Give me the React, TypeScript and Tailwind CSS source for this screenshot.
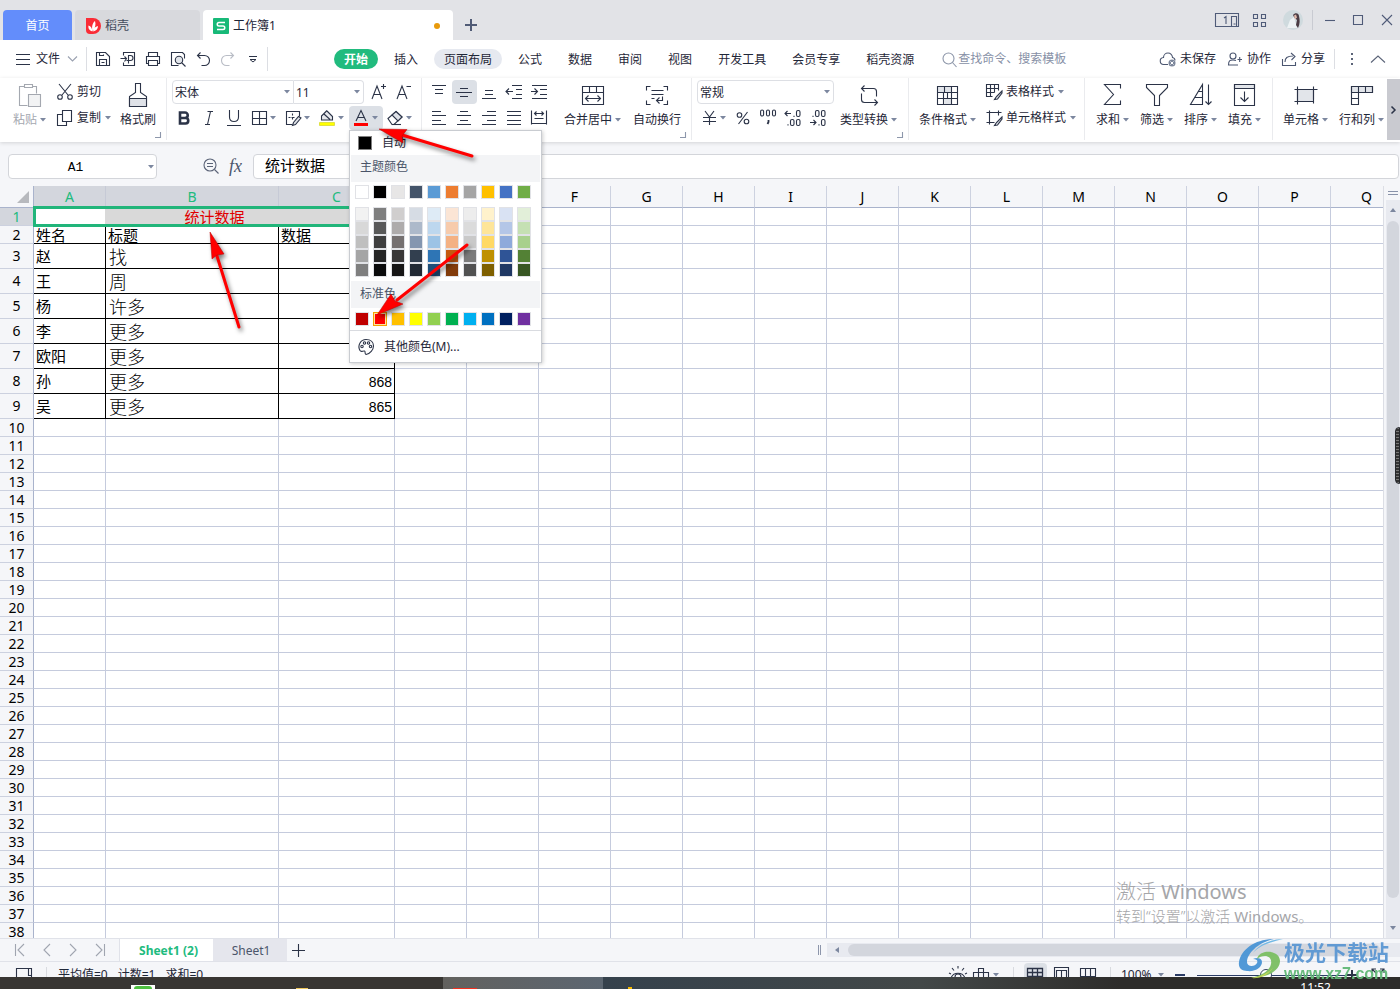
import { ReactNode } from 'react';
import { clsx } from 'clsx';

const INK = '#2b3347';

type IconProps = { w?: number; h?: number; color?: string; snap?: boolean; children: ReactNode };

// snap moves whole-number coordinates onto pixel centres so 1px strokes stay sharp
function Icon({ w = 16, h = w, color = INK, snap = false, children }: IconProps) {
  return (
    <svg width={w} height={h} viewBox={snap ? `-0.5 -0.5 ${w} ${h}` : `0 0 ${w} ${h}`} fill="none" stroke={color} strokeWidth="1.1" className="shrink-0 overflow-visible" aria-hidden="true">
      {children}
    </svg>
  );
}

function Caret() {
  return (
    <svg width="6" height="4" viewBox="0 0 6 4" className="shrink-0" aria-hidden="true">
      <path d="M0 0h6L3 3.5z" fill="#7c879f" />
    </svg>
  );
}

function BigButton({ icon, label, caret = false, className = '' }: { icon: ReactNode; label: string; caret?: boolean; className?: string }) {
  return (
    <button type="button" className={clsx('flex shrink-0 flex-col items-center gap-[5px] whitespace-nowrap pt-[5px]', className)}>
      <span className="flex h-6 items-center">{icon}</span>
      <span className="flex h-4 items-center gap-[3px] leading-4">
        {label}
        {caret && <Caret />}
      </span>
    </button>
  );
}

function RowButton({ icon, label, caret = false, title }: { icon: ReactNode; label?: string; caret?: boolean; title?: string }) {
  return (
    <button type="button" aria-label={title} className="flex h-6 items-center gap-1 whitespace-nowrap leading-[18px]">
      {icon}
      {label}
      {caret && <Caret />}
    </button>
  );
}

function Tool({ title, active = false, children }: { title: string; active?: boolean; children: ReactNode }) {
  return (
    <button type="button" aria-label={title} className={clsx('flex h-6 w-[25px] items-center justify-center rounded-sm pr-px', active && 'bg-[#dce0e6]')}>
      {children}
    </button>
  );
}

function SplitTool({ title, active = false, children }: { title: string; active?: boolean; children: ReactNode }) {
  return (
    <button type="button" aria-label={title} className={clsx('flex h-6 w-[34px] items-center gap-[3px] rounded-sm pl-1', active && 'bg-[#dce0e6]')}>
      {children}
      <Caret />
    </button>
  );
}

function Select({ label, value, className }: { label: string; value: string; className: string }) {
  return (
    <div className={clsx('relative h-6 border border-[#dddfe4] bg-white', className)}>
      <select aria-label={label} className="h-full w-full appearance-none bg-transparent pl-0.5 pt-0.5 text-xs leading-4 outline-none">
        <option>{value}</option>
      </select>
      <span className="pointer-events-none absolute right-[3px] top-1/2 -translate-y-1/2">
        <Caret />
      </span>
    </div>
  );
}

function Corner() {
  return (
    <span className="absolute bottom-0.5 right-[5px]">
      <Icon w={6} color="#8d97ab">
        <path d="M5.5 0v5.5H0" />
      </Icon>
    </span>
  );
}

function Group({ className, children, corner = false }: { className?: string; children: ReactNode; corner?: boolean }) {
  return (
    <div className={clsx('relative flex shrink-0 items-start border-r border-[#eaebee]', className)}>
      {children}
      {corner && <Corner />}
    </div>
  );
}

/* ---------- title bar ---------- */

function TitleBar() {
  return (
    <header className="flex h-10 shrink-0 items-end bg-[#e2e3e7] pl-[3px]">
      <button type="button" className="h-[30px] w-[69px] rounded-t-sm bg-[#638dfb] pt-0.5 text-white">首页</button>
      <button type="button" className="ml-[3px] flex h-[30px] w-[125px] items-center gap-1 rounded-t-sm bg-[#d8d9dd] pl-[11px] pt-0.5 text-[#444c5c]">
        <svg width="15" height="16" viewBox="0 0 15 16" aria-hidden="true">
          <path d="M0 0h7a8 8 0 0 1 0 16H4a4 4 0 0 1-4-4z" fill="#fa2c37" />
          <path d="M6.500 13.500C3 12.500 2 10 2.500 7.500c2.500.5 3.500 2.500 4 6zM6.500 13C5.500 9 6.500 5 9 3c1 3 .5 7-2.500 10zM7 13.500c.5-3 2-5 5-5.500 0 3-2 5-5 5.500z" fill="#fff" />
        </svg>
        稻壳
      </button>
      <button type="button" className="ml-[3px] flex h-[30px] w-[250px] items-center gap-1 rounded-t-sm bg-white pl-[10px] pt-0.5 text-[#1c2436]">
        <svg width="16" height="16" viewBox="0 0 16 16" aria-hidden="true">
          <rect width="16" height="16" rx="1" fill="#17b978" />
          <path d="M12 4.500H6a1.700 1.700 0 0 0 0 3.500h4a1.700 1.700 0 0 1 0 3.500H4" fill="none" stroke="#fff" strokeWidth="1.500" />
        </svg>
        工作簿1
        <span className="ml-auto mr-[13px] size-1.5 rounded-full bg-[#e89a0c]" />
      </button>
      <button type="button" aria-label="新建" className="ml-3 flex h-[30px] items-center">
        <Icon w={12} color="#505b76"><path d="M6 0v12M0 6h12" strokeWidth="2" /></Icon>
      </button>
      <div className="ml-auto flex h-10 items-center text-[#4f5b78]">
        <button type="button" aria-label="窗口" className="mr-3">
          <Icon w={25} h={14} color="#4f5b78">
            <path d="M.5.5h23v13H.500zM16.500 13.500V3.500h5v10M9 5l2-1.500V11M18.500 11h2" />
          </Icon>
        </button>
        <button type="button" aria-label="应用" className="mr-4">
          <Icon w={15} color="#4f5b78" snap><path d="M1 1h4v4H1zM9 1h4v4H9zM1 9h4v4H1zM9 9h4v4H9z" /></Icon>
        </button>
        <button type="button" aria-label="用户">
          <svg width="20" height="20" viewBox="0 0 20 20" aria-hidden="true">
            <circle cx="10" cy="10" r="10" fill="#cfdade" />
            <path d="M4 18l3-8 4-3 3 11z" fill="#edf2f4" />
            <path d="M10 5c2-3 6-2 6 1 1 4 1 8-1 12l-2-3 1-5-3-3z" fill="#4a3c44" />
            <path d="M11 5.500l2-1 1 3-2 2z" fill="#dfb9ab" />
          </svg>
        </button>
        <span className="ml-[9px] h-5 w-px bg-[#c9cbd2]" />
        <button type="button" aria-label="最小化" className="ml-3"><Icon w={10} color="#4f5b78"><path d="M0 5.500h10" /></Icon></button>
        <button type="button" aria-label="最大化" className="ml-[18px]"><Icon w={10} color="#4f5b78"><path d="M.5.5h9v9h-9z" /></Icon></button>
        <button type="button" aria-label="关闭" className="ml-[19px] mr-2"><Icon w={10} color="#4f5b78"><path d="M0 0l10 10M10 0L0 10" /></Icon></button>
      </div>
    </header>
  );
}

/* ---------- menu row ---------- */

const TABS = ['开始', '插入', '页面布局', '公式', '数据', '审阅', '视图', '开发工具', '会员专享', '稻壳资源'];

function MenuBar() {
  return (
    <nav className="flex h-[38px] shrink-0 items-center whitespace-nowrap bg-white pl-4">
      <button type="button" className="flex items-center gap-[6px]">
        <Icon w={14} h={12}><path d="M0 1.500h14M0 6.500h14M0 11.500h14" strokeWidth="1" /></Icon>
        文件
        <span className="ml-0.5"><Icon w={9} h={6} color="#9aa1b0"><path d="M0 .5l4.500 4.500L9 .5" /></Icon></span>
      </button>
      <span className="ml-[9px] mr-1 h-6 w-px bg-[#dcdee3]" />
      <Tool title="保存"><Icon snap><path d="M1 1h9l4 4v9H1zM4 14V8h7v6M4 1v3h4V3M6 11h3" /></Icon></Tool>
      <Tool title="输出为PDF"><Icon snap><path d="M3 4V1h11v13H3v-3M0 7h6M4 5l2 2-2 3M8 12V4h2a2 2 0 0 1 0 5H6" /></Icon></Tool>
      <Tool title="打印"><Icon snap><path d="M3 5V1h9v4M3 12H1V5h13v7h-2M3 9h9v5H3z" /></Icon></Tool>
      <Tool title="打印预览"><Icon snap><path d="M8 14H1V1h11l2 2v4M11 11l4 4" /><circle cx="8.500" cy="8.500" r="3.700" fill="#e2e5ea" /></Icon></Tool>
      <Tool title="撤销"><Icon snap><path d="M5 1L2 4l3 3M2 4h7a5 5 0 0 1 0 10H6" /></Icon></Tool>
      <Tool title="恢复"><Icon snap color="#b9bdc6"><path d="M10 1l3 3-3 3M13 4H6a5 5 0 0 0 0 10h3" /></Icon></Tool>
      <Tool title="更多"><Icon w={8} h={8}><path d="M0 1.500h8M1 4.500l3 2.500 3-2.500z" strokeWidth="1" /></Icon></Tool>
      <span className="ml-px h-6 w-px bg-[#dcdee3]" />

      <div className="ml-[66px] flex gap-[6px]">
        {TABS.map((tab) => (
          <button
            key={tab}
            type="button"
            className={clsx('h-5 rounded-full px-[10px] leading-[22px]', tab === '开始' && 'bg-[#21bb7e] font-bold text-white', tab === '页面布局' && 'bg-[#e6e9f0]')}
          >
            {tab}
          </button>
        ))}
      </div>

      <label className="ml-[18px] flex min-w-0 flex-1 items-center gap-px">
        <Icon w={15} color="#8e97aa"><circle cx="6.500" cy="6.500" r="5.500" /><path d="M10.500 10.500L14.500 15" /></Icon>
        <input aria-label="查找" placeholder="查找命令、搜索模板" className="w-[130px] bg-transparent outline-none placeholder:text-[#8790a6]" />
      </label>

      <button type="button" className="flex items-center gap-1">
        <Icon color="#4b5670"><path d="M8 13.500H4a3.500 3.500 0 0 1-.5-7 4.500 4.500 0 0 1 9 0 3 3 0 0 1 2.500 3" /><circle cx="12" cy="12" r="3.500" fill="#7d879c" stroke="none" /><path d="M10.500 10.500l3 3M13.500 10.500l-3 3" stroke="#fff" strokeWidth="1" /></Icon>
        未保存
      </button>
      <button type="button" className="ml-3 flex items-center gap-[5px]">
        <Icon w={14} h={14} color="#4b5670"><circle cx="5" cy="4" r="3" /><path d="M10 13H.500c0-5 2-5 4.500-5 1.500 0 2 0 3 .5M9.500 7.500H14M11.700 5v5" /></Icon>
        协作
      </button>
      <button type="button" className="ml-[11px] flex items-center gap-[5px]">
        <Icon w={14} h={14} color="#4b5670"><path d="M.5 7v6.500h13V10M3 10c0-4 2-6 8-6M9 1l4 3.500L9.500 8" /></Icon>
        分享
      </button>
      <span className="ml-[9px] h-5 w-px bg-[#dcdee3]" />
      <button type="button" aria-label="更多选项" className="ml-4">
        <svg width="3" height="12" viewBox="0 0 3 12" fill="#5b6478"><path d="M0 0h2v2H0zM0 5h2v2H0zM0 10h2v2H0z" /></svg>
      </button>
      <button type="button" aria-label="折叠功能区" className="ml-[17px] mr-[15px]">
        <Icon w={14} h={8} color="#5b6478"><path d="M0 7.500l7-6.500 7 6.500" /></Icon>
      </button>
    </nav>
  );
}

/* ---------- font colour menu ---------- */

const THEME_ROWS = [
  ['#f2f2f2', '#7f7f7f', '#d0cece', '#d6dce4', '#deebf6', '#fbe5d5', '#ededed', '#fff2cc', '#d9e2f3', '#e2efd9'],
  ['#d8d8d8', '#595959', '#aeabab', '#adb9ca', '#bdd7ee', '#f7cbac', '#dbdbdb', '#fee599', '#b4c6e7', '#c5e0b3'],
  ['#bfbfbf', '#3f3f3f', '#757070', '#8496b0', '#9cc3e5', '#f4b183', '#c9c9c9', '#ffd965', '#8eaadb', '#a8d08d'],
  ['#a5a5a5', '#262626', '#3a3838', '#323f4f', '#2e75b5', '#c55a11', '#7b7b7b', '#bf9000', '#2f5496', '#538135'],
  ['#7f7f7f', '#0c0c0c', '#171616', '#222a35', '#1e4e79', '#833c0b', '#525252', '#7f6000', '#1f3864', '#375623'],
];
const THEME = ['#ffffff', '#000000', '#e7e6e6', '#44546a', '#5b9bd5', '#ed7d31', '#a5a5a5', '#ffc000', '#4472c4', '#70ad47'];
const STANDARD = ['#c00000', '#ff0000', '#ffc000', '#ffff00', '#92d050', '#00b050', '#00b0f0', '#0070c0', '#002060', '#7030a0'];

function Swatches({ colors, selected }: { colors: string[]; selected?: string }) {
  return (
    <div className="flex gap-1 pl-1">
      {colors.map((c, i) => (
        <button
          key={i}
          type="button"
          aria-label={c}
          className={clsx('size-[14px] border', c === selected ? 'border-[#f5a100] ring-1 ring-inset ring-[#ffe2a0]' : 'border-[#e1e2e6]')}
          style={{ backgroundColor: c }}
        />
      ))}
    </div>
  );
}

function ColorMenu() {
  return (
    <div className="absolute left-0 top-full z-20 w-[193px] border border-[#c9ccd1] bg-white text-left shadow-[1px_1px_4px_rgba(0,0,0,0.2)]">
      <button type="button" className="flex h-6 w-full items-center gap-[10px] pl-2 leading-[18px]">
        <span className="size-[14px] border border-[#7f7f7f] bg-black" />
        自动
      </button>
      <p className="mx-px h-[27px] bg-[#f3f4f6] pl-[9px] leading-6 text-[#4a5468]">主题颜色</p>
      <div className="pb-2 pl-px pt-[3px]"><Swatches colors={THEME} /></div>
      <div className="pb-1 pl-px">
        {THEME_ROWS.map((row, i) => <Swatches key={i} colors={row} />)}
      </div>
      <p className="mx-px h-[27px] bg-[#f3f4f6] pl-[9px] leading-[26px] text-[#4a5468]">标准色</p>
      <div className="py-1 pl-px"><Swatches colors={STANDARD} selected="#ff0000" /></div>
      <button type="button" className="flex h-8 w-full items-center gap-[10px] border-t border-[#d9dbe0] pl-2 leading-[18px]">
        <Icon w={16}>
          <path d="M8 15.500c-2-1 0-3-1.500-3.500C5 11.500 3 13.500 2 11.500-1 6 3 .5 8 .5c5 0 7.500 3 7.500 6.500S12 15 8 15.500z" />
          <circle cx="4" cy="7.500" r="1.200" /><circle cx="6.500" cy="4" r="1.200" /><circle cx="10.500" cy="4" r="1.200" /><circle cx="12.500" cy="7.500" r="1.200" />
        </Icon>
        其他颜色(M)...
      </button>
    </div>
  );
}

/* ---------- ribbon ---------- */

function Ribbon() {
  return (
    <section className="relative z-10 flex h-16 shrink-0 bg-white pb-0.5 shadow-[0_1px_4px_rgba(0,0,0,0.14)]">
      <Group corner className="w-[167px]">
        <BigButton className="ml-[13px] text-[#a4a8b0]" caret label="粘贴" icon={
          <Icon snap w={22} h={24} color="#a4a8b0"><path d="M8 22H0V3h5M13 3h4v7M5 1h8v3H5z" /><path d="M9 11h12v12H9z" fill="#f2f3f4" /></Icon>
        } />
        <div className="ml-[11px] flex flex-col gap-0.5 pt-0.5">
          <RowButton label="剪切" icon={<Icon><path d="M2 0l9 11M14 0L5 11" /><circle cx="3" cy="13" r="2.300" /><circle cx="13" cy="13" r="2.300" /></Icon>} />
          <RowButton caret label="复制" icon={<Icon snap><path d="M5 0h9v11H5zM5 4H0v11h9v-4" /></Icon>} />
        </div>
        <BigButton className="ml-[9px]" label="格式刷" icon={
          <Icon snap w={20} h={24}><path d="M7 0h5v9l6 4v10H1V13l6-4z" /><path d="M1 15h17v8H1z" fill="#dfe2e8" /></Icon>
        } />
      </Group>

      <Group className="w-[255px] pl-[5px] pt-0.5">
        <div className="flex flex-col gap-0.5">
          <div className="flex">
            <Select label="字体" value="宋体" className="w-[122px] rounded-l-sm" />
            <Select label="字号" value="11" className="w-[70px] rounded-r-sm border-l-0" />
            <span className="w-[3px]" />
            <Tool title="增大字号"><Icon><path d="M1 15L6 2l5 13M2.500 10.500h7M12.500 0v5M10 2.500h5" /></Icon></Tool>
            <Tool title="减小字号"><Icon><path d="M1 15L6 2l5 13M2.500 10.500h7M10.500 2.500H15" /></Icon></Tool>
          </div>
          <div className="flex">
            <Tool title="加粗"><Icon w={12} h={14}><path d="M2 1.500h5a2.500 2.500 0 0 1 0 5.500H2zM2 7h5.500a2.700 2.700 0 0 1 0 5.500H2z" strokeWidth="2.600" /></Icon></Tool>
            <Tool title="倾斜"><Icon w={10} h={14}><path d="M3.500.5H9M1 13.500h5M6.500.5L3.500 13.500" /></Icon></Tool>
            <Tool title="下划线"><Icon w={16} h={16}><path d="M3.500 0v7c0 6 9 6 9 0V0M1 15.500h14" /></Icon></Tool>
            <SplitTool title="边框"><Icon snap><path d="M1 1h14v13H1zM8 1v13M1 8h14" /></Icon></SplitTool>
            <SplitTool title="绘制边框"><Icon snap><path d="M7 14H1V1h13v5M7 3v2M7 7v2M3 7h2M6 7h3" /><path d="M15.500 7.500L13 6l-5 6-1 3 3-1z" fill="#dfe2e8" /></Icon></SplitTool>
            <SplitTool title="填充颜色"><Icon><path d="M8 .5L2.500 6v4h11V6.500L8 1M5 4L11 9.500" fill="#e6e8ec" /><path d="M.5 12.500h15v3H.500z" fill="#ff0" stroke="#c4c400" strokeWidth=".5" /></Icon></SplitTool>
            <div className="relative">
              <SplitTool title="字体颜色" active><Icon><path d="M3 11L8 .5 13 11M5 7.500h6" /><path d="M1 14.500h14" stroke="#f00" strokeWidth="3" /></Icon></SplitTool>
              <ColorMenu />
            </div>
            <SplitTool title="清除"><Icon><path d="M1 8.500L9 1.500l6 5.500-8 7.500H5z" /><path d="M9 1.500l6 5.500-4 4L5 5z" fill="#dfe2e8" /><path d="M5 14.500h9" /></Icon></SplitTool>
          </div>
        </div>
      </Group>

      <Group corner className="w-[270px] pl-[5px] pt-0.5">
        <div className="flex flex-col gap-0.5">
          <div className="flex">
            <Tool title="顶端对齐"><Icon><path d="M1 1.500h14M4 5.500h8M4 9.500h8" /></Icon></Tool>
            <Tool title="垂直居中" active><Icon><path d="M4 4.500h8M0 8.500h16M4 12.500h8" /></Icon></Tool>
            <Tool title="底端对齐"><Icon><path d="M4 6.500h8M4 10.500h8M1 14.500h14" /></Icon></Tool>
            <Tool title="减少缩进"><Icon><path d="M6 1.500h10M10 5.500h6M10 10.500h6M6 14.500h10M0 7.500h7M3 4.500l-3 3 3 3" /></Icon></Tool>
            <Tool title="增加缩进"><Icon><path d="M1 1.500h15M9 5.500h7M9 10.500h7M1 14.500h15M0 7.500h6M3.500 4.500l3 3-3 3" /></Icon></Tool>
          </div>
          <div className="flex">
            <Tool title="左对齐"><Icon><path d="M1 1.500h9M1 5.500h14M1 10.500h9M1 14.500h14" /></Icon></Tool>
            <Tool title="居中"><Icon><path d="M4 1.500h8M1 5.500h14M4 10.500h8M1 14.500h14" /></Icon></Tool>
            <Tool title="右对齐"><Icon><path d="M6 1.500h9M1 5.500h14M6 10.500h9M1 14.500h14" /></Icon></Tool>
            <Tool title="两端对齐"><Icon><path d="M1 1.500h14M1 5.500h14M1 10.500h14M1 14.500h14" /></Icon></Tool>
            <Tool title="分散对齐"><Icon snap><path d="M0 0v14M15 0v14M3 3h9M5 1L3 3l2 2M10 1l2 2-2 2M3 8h9M0 13h15" /></Icon></Tool>
          </div>
        </div>
        <BigButton className="-mt-0.5 ml-3" caret label="合并居中" icon={
          <Icon snap w={22} h={20}><path d="M0 1h21v18H0zM0 7h21M7 1v6M14 1v6M3 13h15M6 10l-3 3 3 3M15 10l3 3-3 3" /></Icon>
        } />
        <BigButton className="-mt-0.5 ml-3" label="自动换行" icon={
          <Icon snap w={22} h={20}><path d="M4 1H0v4M17 1h4v4M4 19H0v-4M17 19h4v-4M5 5h12M5 9h12M5 13h3M16 11v4h-6M13 12l-3 3 3 3" /></Icon>
        } />
      </Group>

      <Group corner className="w-[217px] pl-[5px] pt-0.5">
        <div className="flex flex-col gap-0.5">
          <Select label="数字格式" value="常规" className="w-[137px] rounded-sm" />
          <div className="flex">
            <SplitTool title="货币"><Icon><path d="M4 1l4.500 6L13 1M8.500 7v8M2 7.500h13M2 11.500h13" /></Icon></SplitTool>
            <Tool title="百分比"><Icon w={14} h={14}><circle cx="3.500" cy="4" r="2.300" /><circle cx="10.500" cy="10.500" r="2.300" /><path d="M11.500 1L2.500 13" /></Icon></Tool>
            <Tool title="千位分隔"><Icon><rect x=".6" y="0" width="3" height="6" rx="1.500" /><rect x="6.500" y="0" width="3" height="6" rx="1.500" /><rect x="12.500" y="0" width="3" height="6" rx="1.500" /><path d="M8.500 10v2l-1 2" strokeWidth="1.800" /></Icon></Tool>
            <Tool title="增加小数位"><Icon><path d="M0 3.500h6M2.500 1L0 3.500 2.500 6M9 7V5.800M3 15.500v-1.200" /><rect x="11.500" y="0.500" width="3.500" height="6" rx="1.500" /><rect x="5.500" y="9.500" width="3.500" height="6" rx="1.500" /><rect x="11.500" y="9.500" width="3.500" height="6" rx="1.500" /></Icon></Tool>
            <Tool title="减少小数位"><Icon><path d="M0 12.500h6M3.500 10L6 12.500 3.500 15M3 7V5.800M9 15.500v-1.200" /><rect x="5.500" y="0.500" width="3.500" height="6" rx="1.500" /><rect x="11.500" y="0.500" width="3.500" height="6" rx="1.500" /><rect x="11.500" y="9.500" width="3.500" height="6" rx="1.500" /></Icon></Tool>
          </div>
        </div>
        <BigButton className="-mt-0.5 ml-[6px]" caret label="类型转换" icon={
          <Icon snap w={20} h={22}><path d="M5 1L2 4l3 3M2 4h12a3 3 0 0 1 3 3v5M2 9v6a3 3 0 0 0 3 3h13M15 15l3 3-3 3" /></Icon>
        } />
      </Group>

      <Group className="w-[176px]">
        <BigButton className="ml-[10px]" caret label="条件格式" icon={
          <Icon snap w={22} h={20}><path d="M0 1h14v6H0zM7 13h7v6H7z" fill="#e2e5ea" stroke="none" /><path d="M0 1h20v18H0zM0 7h20M0 13h20M7 1v6M14 1v18M10 7v6M6 7v12" /></Icon>
        } />
        <div className="ml-[10px] flex flex-col gap-0.5 pt-0.5">
          <RowButton caret label="表格样式" icon={<Icon snap><path d="M6 12H0V0h12v6M0 4h12M0 8h8M4 0v12M8 0v8" /><path d="M15.500 6.500L10 12l-2 3 3-.5 4.500-6z" fill="#dfe2e8" /></Icon>} />
          <RowButton caret label="单元格样式" icon={<Icon snap><path d="M3 0v14M0 2h15M12 0v5M0 12h8" /><path d="M15.500 6.500L10 12l-2 3 3-.5 4.500-6z" fill="#dfe2e8" /></Icon>} />
        </div>
      </Group>

      <Group className="w-[188px] gap-[11px] pl-[11px]">
        <BigButton caret label="求和" icon={<Icon snap w={20} h={22}><path d="M17 4V0H1l9 10L1 20h16v-4" /></Icon>} />
        <BigButton caret label="筛选" icon={<Icon snap w={22} h={22}><path d="M0 0h21v3l-8 8v10H8V11L0 3z" /></Icon>} />
        <BigButton caret label="排序" icon={<Icon snap w={24} h={22}><path d="M13 20V0L1 20zM9 7h4M5 13h8M19 0v20M16 17l3 3 3-3" /></Icon>} />
        <BigButton caret label="填充" icon={<Icon snap w={22} h={22}><path d="M0 0h20v4H0z" fill="#e2e5ea" /><path d="M0 0h20v21H0zM10 7v10M6 13l4 4 4-4" /></Icon>} />
      </Group>

      <div className="flex min-w-0 flex-1 pl-[10px]">
        <div className="flex gap-[11px]">
          <BigButton caret label="单元格" icon={<Icon snap w={24} h={20}><path d="M3 4h16v12H3z" fill="#e2e5ea" /><path d="M3 1v18M19 1v13M0 4h23M0 16h17M19 16v2" /></Icon>} />
          <BigButton caret label="行和列" icon={<Icon snap w={22} h={20}><path d="M0 1h21v6H0z" fill="#e2e5ea" /><path d="M0 1h21v6H7v12H0zM0 7h7M7 1v6M14 1v6M0 13h7" /></Icon>} />
        </div>
        <button type="button" aria-label="向右滚动" className="ml-auto mt-px flex w-[13px] shrink-0 items-center justify-center bg-[#c9cad0]">
          <Icon w={5} h={8}><path d="M.5 0.500L4 4 .5 7.500" strokeWidth="1.500" /></Icon>
        </button>
      </div>
    </section>
  );
}

function FormulaBar() {
  return (
    <div className="flex h-11 shrink-0 items-start bg-[#f5f6f9] pl-2 pr-px pt-3 text-black">
      <div className="relative h-[25px] w-[149px] rounded-sm border border-[#d3d5da] bg-white">
        <input aria-label="名称框" defaultValue="A1" className="h-full w-full bg-transparent pr-[14px] pt-0.5 text-center font-['Liberation_Mono',monospace] text-[13px] outline-none" />
        <span className="pointer-events-none absolute right-0.5 top-1/2 -translate-y-1/2"><Caret /></span>
      </div>
      <button type="button" aria-label="缩小" className="ml-[46px] mt-1">
        <Icon w={16} color="#5b6478"><circle cx="7" cy="7" r="6" /><path d="M11.500 11.500l4 4M4 5.500h6M4 8.500h6" /></Icon>
      </button>
      <button type="button" className="ml-[10px] w-6 text-left font-['Liberation_Serif',serif] text-lg italic leading-6 text-[#4b556b]">fx</button>
      <input aria-label="编辑栏" defaultValue="统计数据" className="h-[25px] min-w-0 flex-1 rounded-sm border border-[#d3d5da] bg-white pb-[5px] pl-[11px] text-[15px] leading-4 outline-none" />
    </div>
  );
}

/* ---------- sheet ---------- */

const COLS = 'ABCDEFGHIJKLMNOPQ'.split('');
const ROWS = Array.from({ length: 38 }, (_, i) => i + 1);
const DATA: Record<number, [string, string, string]> = {
  2: ['姓名', '标题', '数据'],
  3: ['赵', '找', ''],
  4: ['王', '周', ''],
  5: ['杨', '许多', ''],
  6: ['李', '更多', ''],
  7: ['欧阳', '更多', ''],
  8: ['孙', '更多', '868'],
  9: ['吴', '更多', '865'],
};

function Sheet() {
  return (
    <div className="min-w-0 flex-1 overflow-hidden border-r border-[#dcdee5] bg-white">
      <table className="w-[1403px] table-fixed border-separate border-spacing-0 text-black">
        <colgroup>
          <col className="w-[34px]" />
          <col className="w-[72px]" />
          <col className="w-[173px]" />
          <col className="w-[116px]" />
          {COLS.slice(3).map((c) => <col key={c} className="w-[72px]" />)}
        </colgroup>
        <thead>
          <tr className="h-[22px] text-sm leading-4">
            <th className="border-b border-r border-[#a9b3cc] bg-[#f5f6f9] p-0">
              <svg width="12" height="12" viewBox="0 0 12 12" className="ml-auto mr-1" aria-hidden="true"><path d="M12 0v12H0z" fill="#b7b9be" /></svg>
            </th>
            {COLS.map((c, i) => (
              <th
                key={c}
                scope="col"
                className={clsx('border-b border-r border-b-[#a9b3cc] p-0 font-normal', i < 3 ? 'border-r-[#c6cad6] bg-[#d3d6dd] text-[#21bb7e]' : 'border-r-[#cdd2e0] bg-[#f5f6f9]')}
              >
                {c}
              </th>
            ))}
          </tr>
        </thead>
        <tbody>
          {ROWS.map((r) => {
            const tall = r > 2 && r < 10;
            const row = DATA[r];
            return (
              <tr key={r} className={tall ? 'h-[25px]' : 'h-[18px]'}>
                <th scope="row" className={clsx('border-b border-r border-b-[#ccd1df] border-r-[#a9b3cc] p-0 text-sm font-normal leading-4', r === 1 ? 'bg-[#d3d6dd] text-[#21bb7e]' : 'bg-[#f5f6f9]')}>
                  {r}
                </th>
                {r === 1 && (
                  <td colSpan={3} className="relative p-0">
                    <div className="flex h-[17px]">
                      <span className="w-[71px]" />
                      <span className="flex-1 bg-[#d9d9d9]" />
                    </div>
                    <span className="absolute inset-0 text-center text-[15px] leading-[18px] text-[#e00000]">统计数据</span>
                    <span className="absolute -bottom-px -left-px -right-px -top-0.5 border-[3px] border-[#21b57a]" />
                  </td>
                )}
                {COLS.slice(r === 1 ? 3 : 0).map((c, i) => {
                  const filled = row && i < 3;
                  return (
                    <td
                      key={c}
                      className={clsx(
                        'overflow-hidden whitespace-nowrap border-b border-r py-0',
                        filled ? 'border-black' : 'border-[#c5cbdd]',
                        filled && i === 2 && r > 2 ? "pr-0.5 pt-0.5 text-right font-['Liberation_Sans',sans-serif]" : 'pl-0.5',
                        filled && i === 1 && tall && 'pl-[3px] pt-0.5 text-lg font-light leading-5',
                        filled && i === 2 && tall ? 'text-sm leading-4' : !(i === 1 && tall) && 'text-[15px] leading-4',
                      )}
                    >
                      {filled ? row[i] : null}
                    </td>
                  );
                })}
              </tr>
            );
          })}
        </tbody>
      </table>
    </div>
  );
}

function VerticalScroll() {
  return (
    <div className="relative flex w-4 shrink-0 flex-col items-center bg-[#f5f6f9] pl-[2px] pt-[5px]">
      <Icon w={10} h={4} color="#8993aa"><path d="M0 .5h10M0 3.500h10" strokeWidth="1" /></Icon>
      <div className="mt-[5px] flex w-[14px] flex-1 flex-col items-center bg-[#e8eaf0]">
        <svg width="6" height="4" viewBox="0 0 6 4" className="mt-2" aria-hidden="true"><path d="M0 4h6L3 0z" fill="#7c879f" /></svg>
        <span className="mb-7 mt-[9px] w-3 flex-1 rounded-full bg-[#d3d6dd]" />
        <svg width="6" height="4" viewBox="0 0 6 4" className="mb-2" aria-hidden="true"><path d="M0 0h6L3 4z" fill="#7c879f" /></svg>
      </div>
      <span className="absolute right-0 top-[241px] h-[57px] w-[5px] rounded-l-sm border border-[#26282c] bg-[repeating-linear-gradient(#777_0_1px,#333_1px_3px)]" />
    </div>
  );
}

function SheetTabs() {
  return (
    <div className="flex h-6 shrink-0 items-stretch border-y border-[#e0e2e9] bg-[#f5f6f9]">
      <div className="flex w-[120px] items-center gap-[18px] border-r border-[#e0e2e9] pl-[15px]">
        <button type="button" aria-label="第一个"><Icon w={10} h={12} color="#a0a5b0"><path d="M.500 0v12M9 0L3 6l6 6" /></Icon></button>
        <button type="button" aria-label="上一个"><Icon w={8} h={12} color="#a0a5b0"><path d="M7 0L1 6l6 6" /></Icon></button>
        <button type="button" aria-label="下一个"><Icon w={8} h={12} color="#a0a5b0"><path d="M1 0l6 6-6 6" /></Icon></button>
        <button type="button" aria-label="最后一个"><Icon w={10} h={12} color="#a0a5b0"><path d="M1 0l6 6-6 6M9.500 0v12" /></Icon></button>
      </div>
      <button type="button" className="w-[93px] bg-white pl-1 pt-0.5 font-bold text-[#21bb7e]">Sheet1 (2)</button>
      <button type="button" className="w-[74px] bg-[#e5e6ed] pl-0.5 pt-0.5 text-[#4b556b]">Sheet1</button>
      <button type="button" aria-label="新建工作表" className="ml-[5px]"><Icon w={13}><path d="M6.500 0v13M0 6.500h13" /></Icon></button>
      <div className="ml-auto flex w-[582px] shrink-0 items-center">
        <Icon w={4} h={10} color="#8d96ab"><path d="M.5 0v10M2.500 0v10" strokeWidth="1" /></Icon>
        <div className="ml-[5px] flex h-[14px] flex-1 items-center bg-[#e8eaf0]">
          <svg width="4" height="6" viewBox="0 0 4 6" className="ml-2" aria-hidden="true"><path d="M4 0v6L0 3z" fill="#7c879f" /></svg>
          <span className="ml-[9px] mr-5 h-3 flex-1 rounded-full bg-[#d3d6dd]" />
        </div>
      </div>
    </div>
  );
}

function StatusBar() {
  return (
    <div className="h-[15px] shrink-0 overflow-hidden bg-[#f5f6f9]">
      <div className="flex h-[26px] items-center whitespace-nowrap pl-4">
        <Icon w={16}><path d="M8 15H.500V1.500h15v9M12.500 1.500v7h3" /></Icon>
        <span className="ml-[14px] h-4 w-px bg-[#d9dbe0]" />
        <div className="ml-[11px] flex gap-[10px]">
          <span>平均值=0</span><span>计数=1</span><span>求和=0</span>
        </div>
        <div className="ml-auto flex items-center">
          <Icon w={18}><path d="M2 12a7.500 7.500 0 0 1 14 0M9 0v2.500M3 2l2 2.500M15 2l-2 2.500M0 7l2 1M18 7l-2 1" /><circle cx="9" cy="11" r="3" /></Icon>
          <span className="ml-[6px]"><Icon snap><path d="M5 5V1h5v14M5 15V5H0v7h15V5h-5M5 5h5" /></Icon></span>
          <span className="ml-1"><Caret /></span>
          <span className="ml-[14px] h-4 w-px bg-[#d9dbe0]" />
          <span className="ml-[10px] flex h-6 w-[23px] items-center justify-center rounded-sm bg-[#dce0e6] pr-px"><Icon snap><path d="M0 1h15v13H0zM0 5h15M0 9h15M5 1v13M10 1v13" strokeWidth="1.300" /></Icon></span>
          <span className="ml-[7px]"><Icon snap><path d="M0 0h14v15H0zM2 15V3h10v12M7 3v12" /></Icon></span>
          <span className="ml-[10px]"><Icon snap><path d="M0 1h15v13H0zM5 1v8M10 1v8M0 9h15" /></Icon></span>
          <span className="ml-[14px] h-4 w-px bg-[#d9dbe0]" />
          <span className="ml-[10px] w-[33px]">100%</span>
          <span className="ml-1"><Caret /></span>
          <span className="ml-[11px] h-0.5 w-[10px] bg-[#2b3c66]" />
          <input type="range" aria-label="缩放" defaultValue={46} className="ml-3 h-3 w-[148px] appearance-none bg-[linear-gradient(#2b3c66,#2b3c66)] bg-[length:100%_1px] bg-center bg-no-repeat [&::-webkit-slider-thumb]:size-3 [&::-webkit-slider-thumb]:appearance-none [&::-webkit-slider-thumb]:rounded-full [&::-webkit-slider-thumb]:border [&::-webkit-slider-thumb]:border-[#3a4663] [&::-webkit-slider-thumb]:bg-white" />
          <span className="mr-3 flex w-[14px] justify-center"><Icon w={10}><path d="M5 0v10M0 5h10" strokeWidth="2" /></Icon></span>
          <span className="mr-[15px]"><Icon w={14}><path d="M1 5V1h4M9 1h4v4M1 1l4 4M13 1L9 5" /></Icon></span>
        </div>
      </div>
    </div>
  );
}

function TaskBar() {
  return (
    <footer className="flex h-3 shrink-0 overflow-hidden bg-[#383633]">
      <div className="flex w-[443px] items-end">
        <span className="ml-[131px] flex h-1 w-6 items-end justify-center overflow-hidden bg-white"><span className="h-[3px] w-[18px] rounded-t-full bg-[#4fc041]" /></span>
        <span className="ml-[141px] h-px w-3 bg-[#efc75a]" />
      </div>
      <div className="flex w-40 items-end bg-linear-to-r from-[#62615e] to-[#5c6671]">
        <span className="ml-[10px] h-px w-[24px] bg-[#f0301f]" />
      </div>
      <div className="flex flex-1 items-end bg-[linear-gradient(90deg,#35414c,#434848_40%,#2e2d2b_65%)]">
        <span className="ml-[25px] h-0.5 w-1 bg-[#f5b800]" />
        <span className="ml-auto mr-[69px] h-[9px] leading-[16px] text-white">11:52</span>
      </div>
    </footer>
  );
}

/* ---------- things lying over the window ---------- */

function Arrow({ d, head }: { d: string; head: string }) {
  return (
    <g className="drop-shadow-[2px_3px_2px_rgba(0,0,0,0.5)]">
      <path d={d} stroke="#f00" strokeWidth="3" strokeLinecap="round" />
      <path d={head} fill="#f00" stroke="#b80000" strokeWidth=".5" />
    </g>
  );
}

function Annotations() {
  return (
    <svg width="560" height="340" viewBox="0 0 560 340" fill="none" className="pointer-events-none absolute left-0 top-0 z-30" aria-hidden="true">
      <Arrow d="M472 156L402 135" head="M379 129L407 129.500L402 136L403 143z" />
      <Arrow d="M467 245L397 300" head="M377 315L391 294L395 301L403 304z" />
      <Arrow d="M239 327L217 256" head="M210 232L224 254L217 255L212 259z" />
    </svg>
  );
}

function Watermarks() {
  return (
    <>
      <div className="pointer-events-none absolute bottom-[61px] right-[72px] z-30 w-[212px] whitespace-nowrap font-light text-[#a5a6a9]">
        <p className="text-xl leading-7">激活 <span className="font-normal">Windows</span></p>
        <p className="pb-0.5 text-[15px] leading-5">转到“设置”以激活 <span className="font-normal">Windows</span>。</p>
      </div>
      <div className="pointer-events-none absolute bottom-[5px] right-[11px] z-30 flex items-center whitespace-nowrap font-bold opacity-95">
        <svg width="46" height="40" viewBox="0 0 46 40" className="mb-[5px]" aria-hidden="true">
          <path d="M36 0C18 0 3 10 1 23c-1 6 3 9 8 9 9 1 15-4 15-9 0-4-5-5-9-3 4 0 5 2 4 4-2 4-10 4-10-1C9 14 21 3 36 0z" fill="#4a95d6" />
          <path d="M45 0C33 0 21 5 15 14 22 6 33 3 45 0z" fill="#6db6e4" />
          <path d="M27 13c8-1 15 2 15 9 0 9-12 17-29 17 9-2 19-7 20-14 1-5-2-8-6-8-3 0-6 1-8 3 1-4 4-6 8-7z" fill="#7bbf62" />
          <path d="M13 39c9-1 17-5 22-10-5 7-13 11-22 10z" fill="#c9d34c" />
        </svg>
        <div>
          <p className="text-[21px] leading-6 text-[#5b97d3]">极光下载站</p>
          <p className="font-['Liberation_Sans',sans-serif] text-base leading-5 text-[#62b877]">www.xz7.com</p>
        </div>
      </div>
    </>
  );
}

export default function App() {
  return (
    <div className="relative flex h-screen flex-col overflow-hidden bg-white font-['Noto_Sans','Noto_Sans_CJK_SC',sans-serif] text-xs text-[#1f2738]">
      <TitleBar />
      <MenuBar />
      <Ribbon />
      <FormulaBar />
      <main className="flex min-h-0 flex-1">
        <Sheet />
        <VerticalScroll />
      </main>
      <SheetTabs />
      <StatusBar />
      <TaskBar />
      <Annotations />
      <Watermarks />
    </div>
  );
}
